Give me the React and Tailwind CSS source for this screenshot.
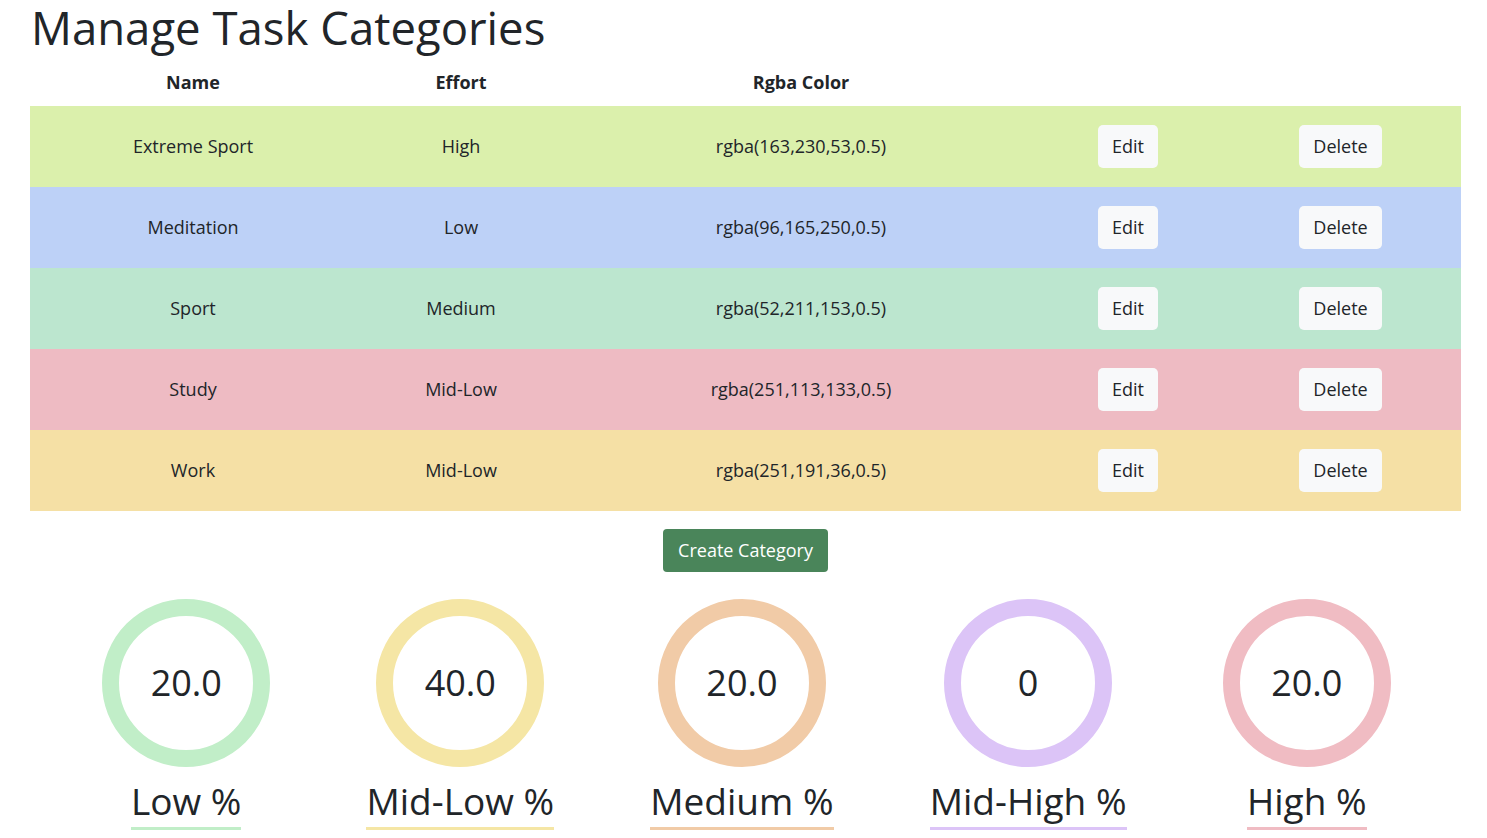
import React from "react";

const categories = [
  { name: "Extreme Sport", effort: "High", color: "rgba(163,230,53,0.5)", bg: "bg-[#dbf0ac]" },
  { name: "Meditation", effort: "Low", color: "rgba(96,165,250,0.5)", bg: "bg-[#bdd1f7]" },
  { name: "Sport", effort: "Medium", color: "rgba(52,211,153,0.5)", bg: "bg-[#bce6cf]" },
  { name: "Study", effort: "Mid-Low", color: "rgba(251,113,133,0.5)", bg: "bg-[#eebbc3]" },
  { name: "Work", effort: "Mid-Low", color: "rgba(251,191,36,0.5)", bg: "bg-[#f5e0a5]" },
];

const stats = [
  { label: "Low %", value: "20.0", ring: "border-[#c1eec8]", line: "border-[#c1eec8]" },
  { label: "Mid-Low %", value: "40.0", ring: "border-[#f5e6a5]", line: "border-[#f5e6a5]" },
  { label: "Medium %", value: "20.0", ring: "border-[#f1cba7]", line: "border-[#f1cba7]" },
  { label: "Mid-High %", value: "0", ring: "border-[#dcc4f7]", line: "border-[#dcc4f7]" },
  { label: "High %", value: "20.0", ring: "border-[#f0bcc3]", line: "border-[#f0bcc3]" },
];

// kartu statistik untuk tiap level effort
const StatRing = ({ stat }) => (
  <div className="flex flex-col items-center">
    <div
      className={`w-[168px] h-[168px] rounded-full border-[17px] ${stat.ring} flex items-center justify-center`}
    >
      <span className="text-[36px] text-[#212529]">{stat.value}</span>
    </div>
    <div className={`mt-[9px] text-[37px] leading-[50px] pb-[1px] text-[#212529] border-b-[3px] ${stat.line}`}>
      {stat.label}
    </div>
  </div>
);

const App = () => {
  return (
    <div className="min-h-screen bg-white text-[#212529] font-['Open_Sans',sans-serif]">
      <div className="pl-[30px] pr-[26px]">
        <h1 className="text-[45.5px] leading-[54px] pl-[1px] pb-[10px]">Manage Task Categories</h1>
        <table className="w-full border-collapse text-[18px]">
          <thead>
            <tr className="h-[42px]">
              <th className="w-[326px] font-bold text-[18px] pb-[6px]">Name</th>
              <th className="w-[210px] font-bold text-[18px] pb-[6px]">Effort</th>
              <th className="w-[470px] font-bold text-[18px] pb-[6px]">Rgba Color</th>
              <th className="w-[184px]"></th>
              <th></th>
            </tr>
          </thead>
          <tbody>
            {categories.map((cat) => (
              <tr key={cat.name} className={`h-[81px] ${cat.bg}`}>
                <td className="text-center">{cat.name}</td>
                <td className="text-center">{cat.effort}</td>
                <td className="text-center">{cat.color}</td>
                <td className="text-center">
                  <button className="h-[43px] px-[14px] bg-[#f8f9fa] rounded-[5px]">Edit</button>
                </td>
                <td className="text-center">
                  <button className="h-[43px] px-[14px] bg-[#f8f9fa] rounded-[5px]">Delete</button>
                </td>
              </tr>
            ))}
          </tbody>
        </table>
        <div className="flex justify-center mt-[18px]">
          <button className="h-[43px] px-[15px] bg-[#4a855a] text-white text-[18px] rounded-[4px]">
            Create Category
          </button>
        </div>
      </div>
      <div className="flex justify-evenly mt-[27px] pl-[6px]">
        {stats.map((s) => (
          <StatRing key={s.label} stat={s} />
        ))}
      </div>
    </div>
  );
};

export default App;
